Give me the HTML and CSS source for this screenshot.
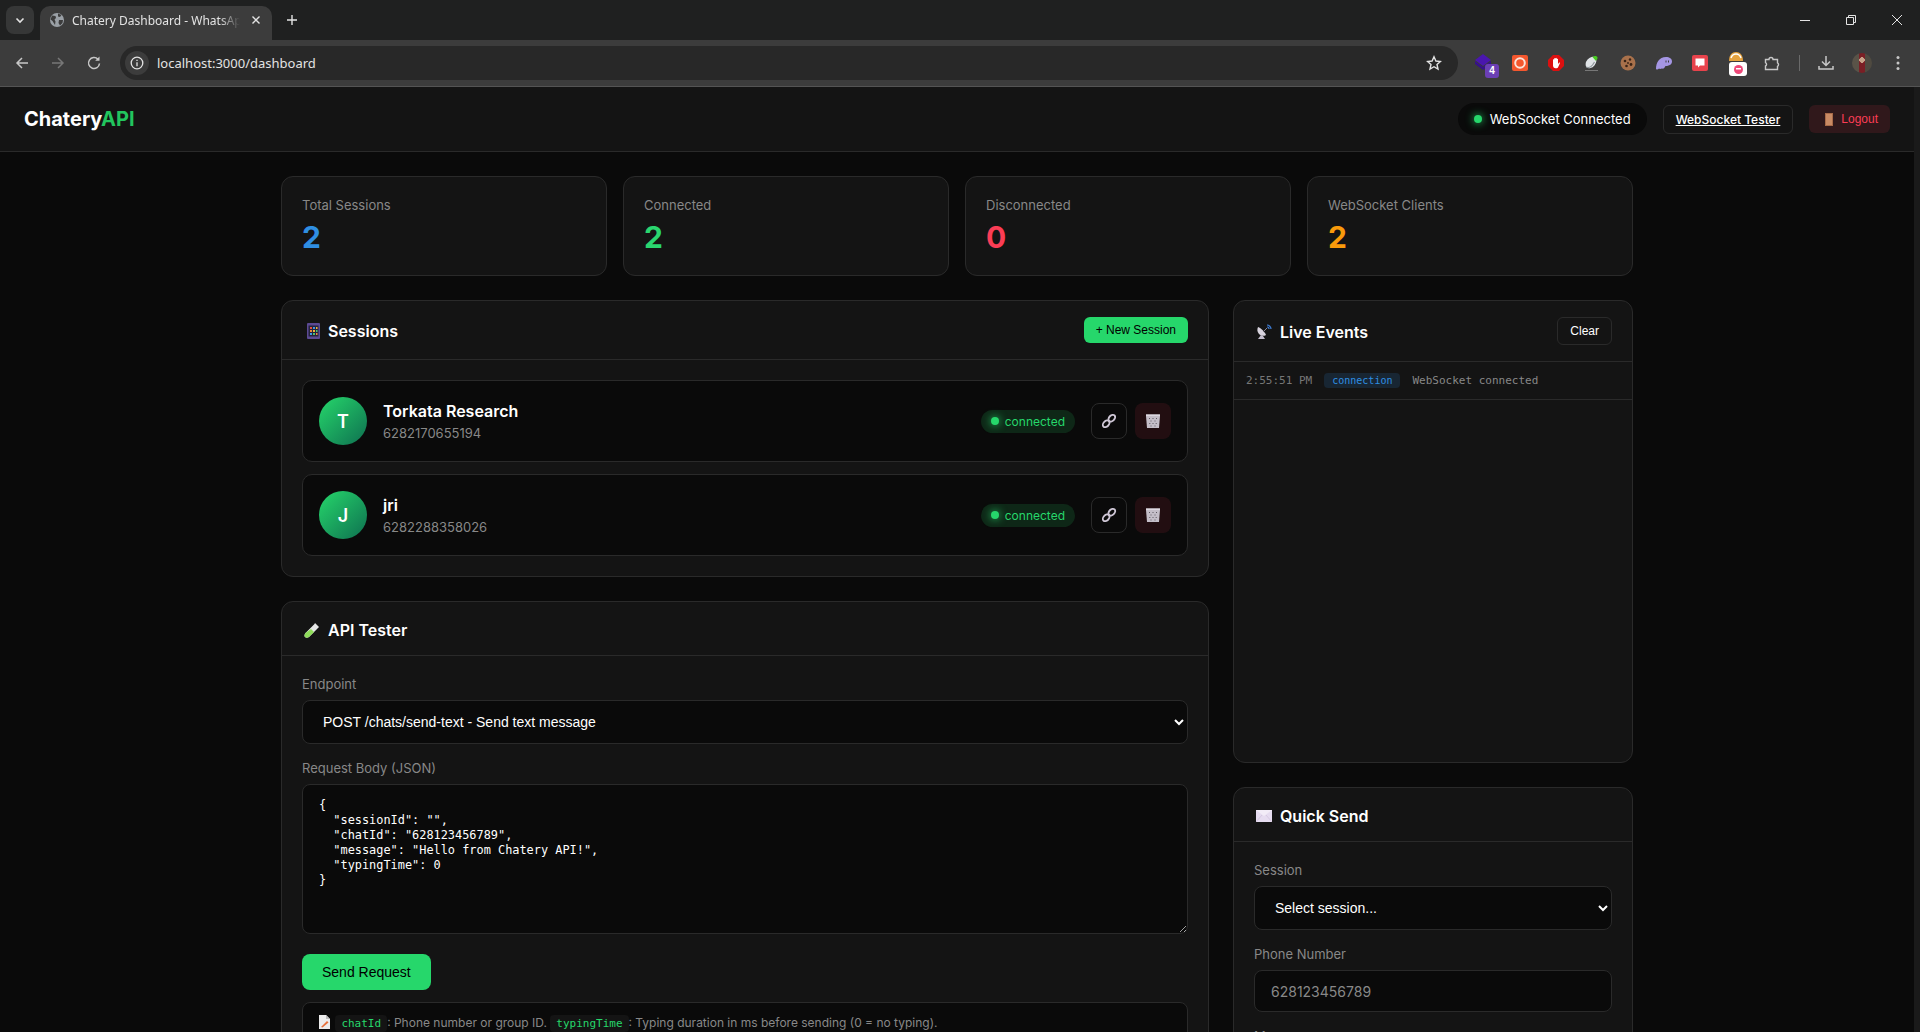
FILE: index.html
```html
<!DOCTYPE html>
<html lang="en">
<head>
  <meta charset="UTF-8">
  <title>Chatery Dashboard - WhatsApp API</title>
  <link rel="stylesheet" href="styles.css">
</head>
<body>

<div class="browser">
  <div class="tabstrip">
    <div class="tab-menu">
      <svg width="12" height="12" viewBox="0 0 12 12"><path d="M2.500 4.500 6 8l3.500-3.500" fill="none" stroke="#e3e3e3" stroke-width="1.600"/></svg>
    </div>
    <div class="tab">
      <svg width="16" height="16" viewBox="0 0 16 16"><circle cx="8" cy="8" r="7" fill="#9aa0a6"/><path d="M3 3.500 6.500 4 7 6 5.500 7.500 6.500 9.500 6 13 3.500 9 1.500 7.500ZM9 1.500 12.500 3 11 5 9 4.500ZM10 8h4l-.5 3-2.500 2.500L9.500 11Z" fill="#3c3c3c"/></svg>
      <span class="tab-title">Chatery Dashboard - WhatsApp API</span>
      <svg class="tab-close" width="10" height="10" viewBox="0 0 10 10"><path d="M1.500 1.500l7 7M8.500 1.500l-7 7" stroke="#e3e3e3" stroke-width="1.400"/></svg>
    </div>
    <svg class="tab-new" width="12" height="12" viewBox="0 0 12 12"><path d="M6 1v10M1 6h10" stroke="#e3e3e3" stroke-width="1.400"/></svg>
    <div class="win-controls">
      <svg width="12" height="12" viewBox="0 0 12 12"><path d="M1 6.500h10" stroke="#e3e3e3"/></svg>
      <svg width="12" height="12" viewBox="0 0 12 12"><path d="M1.500 3.500h7v7h-7zM3.500 3.500v-2h7v7h-2" fill="none" stroke="#e3e3e3"/></svg>
      <svg width="12" height="12" viewBox="0 0 12 12"><path d="M1 1l10 10M11 1 1 11" stroke="#e3e3e3"/></svg>
    </div>
  </div>

  <div class="toolbar">
    <svg class="tool-btn" width="16" height="16" viewBox="0 0 16 16"><path d="M14 8H3M8 3 3 8l5 5" fill="none" stroke="#c7c7c7" stroke-width="1.500"/></svg>
    <svg class="tool-btn" width="16" height="16" viewBox="0 0 16 16"><path d="M2 8h11M8 3l5 5-5 5" fill="none" stroke="#777" stroke-width="1.500"/></svg>
    <svg class="tool-btn" width="16" height="16" viewBox="0 0 16 16"><path d="M13.500 8.500A5.500 5.500 0 1 1 12 4.200" fill="none" stroke="#c7c7c7" stroke-width="1.500"/><path d="M13.500 1.500v4.300H9.200z" fill="#c7c7c7"/></svg>
    <div class="omnibox">
      <div class="site-info">
        <svg width="14" height="14" viewBox="0 0 14 14"><circle cx="7" cy="7" r="5.800" fill="none" stroke="#e3e3e3" stroke-width="1.300"/><path d="M7 6.200v4M7 3.800v1.300" stroke="#e3e3e3" stroke-width="1.300"/></svg>
      </div>
      <span class="url">localhost:3000/dashboard</span>
      <svg class="url-star" width="16" height="16" viewBox="0 0 16 16"><path d="M8 1.800l1.900 4.200 4.500.5-3.400 3 1 4.500L8 11.700l-4 2.300 1-4.500-3.400-3 4.500-.5z" fill="none" stroke="#e3e3e3" stroke-width="1.400"/></svg>
    </div>
    <div class="extensions">
      <div class="ext">
        <svg width="20" height="20" viewBox="0 0 20 20"><path d="M9 1l8 6-8 6-8-6z" fill="#4a16ae"/><path d="M1 8l8 6 8-6v3l-8 6-8-6z" fill="#37108c"/></svg>
        <span class="ext-badge">4</span>
      </div>
      <div class="ext">
        <svg width="16" height="16" viewBox="0 0 16 16"><rect width="16" height="16" rx="2" fill="#f4572e"/><circle cx="8" cy="8" r="4.800" fill="none" stroke="#fbe3da" stroke-width="2"/></svg>
      </div>
      <div class="ext">
        <svg width="16" height="16" viewBox="0 0 16 16"><path d="M5 0h6l5 5v6l-5 5H5l-5-5V5z" fill="#dc1010"/><path d="M5 8V4.500a.8.8 0 0 1 1.200 0V7V3.500a.8.8 0 0 1 1.300 0V7V3.300a.8.8 0 0 1 1.300 0V7V4a.8.8 0 0 1 1.200 0v5l1-1.300c.6-.5 1.200 0 .9.600L10 12.500c-.3.500-.8.700-1.300.700H7.500C6 13.200 5 12 5 10.500z" fill="#fff"/></svg>
      </div>
      <div class="ext">
        <svg width="18" height="18" viewBox="0 0 18 18"><ellipse cx="8" cy="8.500" rx="6.500" ry="4.500" transform="rotate(-50 8 8.500)" fill="#dfe3e6"/><path d="M3.500 13c1.500 1 4 .5 6-2l2-3" fill="none" stroke="#8f969b" stroke-width="1.200"/><path d="M9.500 3c2-1.500 4.500-1 5 .5.300 1.200-.5 2.200-1.800 3.200z" fill="#46cc1f"/><path d="M2 16.500h13" stroke="#777"/></svg>
      </div>
      <div class="ext">
        <svg width="16" height="16" viewBox="0 0 16 16"><circle cx="8" cy="8" r="7.500" fill="#a9714b"/><circle cx="5" cy="6" r="1.300" fill="#3a2417"/><circle cx="10" cy="4.500" r="1.200" fill="#3a2417"/><circle cx="11" cy="9.500" r="1.400" fill="#3a2417"/><circle cx="6.500" cy="11" r="1.300" fill="#3a2417"/><circle cx="8" cy="8" r=".9" fill="#3a2417"/></svg>
      </div>
      <div class="ext">
        <svg width="18" height="14" viewBox="0 0 18 14"><path d="M1 13c0-6 3-12 10-12 3.500 0 6 1.500 6 4.500S14 10 10.500 10c-1 2-2 3-3.500 2.500C5.500 13 4.500 13 4 12.500 3 13.500 2 14 1 13z" fill="#a596e4"/><path d="M11 4.500v2M13.500 4.500v2" stroke="#3c3c3c"/></svg>
      </div>
      <div class="ext">
        <svg width="16" height="16" viewBox="0 0 16 16"><rect width="16" height="16" rx="2" fill="#e8434c"/><path d="M3.500 3.500h9v7H8l-2 2v-2H3.500z" fill="#fff"/></svg>
      </div>
      <div class="ext">
        <svg class="ext-cookie" width="16" height="14" viewBox="0 0 16 14"><path d="M1 10C1 4 4 1 8 1s7 3 7 9z" fill="#e6a33e"/><path d="M3 7c1-3 3-4 5-4s4 1 5 4" fill="none" stroke="#fff" stroke-width="1.500"/></svg>
        <span class="ext-block"><i></i></span>
      </div>
      <div class="ext">
        <svg width="16" height="16" viewBox="0 0 16 16"><path d="M1.500 4.500H5a2 2 0 0 1 4 0h4.500v3.300a2 2 0 0 1 0 3.500v3.200h-12v-3.500a1.800 1.800 0 0 0 0-3.300z" fill="none" stroke="#c7c7c7" stroke-width="1.400"/></svg>
      </div>
      <div class="tool-sep"></div>
      <div class="ext">
        <svg width="16" height="16" viewBox="0 0 16 16"><path d="M8 1v9M4 6.500 8 10.500l4-4M1 11v3h14v-3" fill="none" stroke="#c7c7c7" stroke-width="1.500"/></svg>
      </div>
      <div class="ext">
        <div class="avatar-user"></div>
      </div>
      <div class="ext">
        <svg width="4" height="16" viewBox="0 0 4 16"><circle cx="2" cy="2.500" r="1.500" fill="#c7c7c7"/><circle cx="2" cy="8" r="1.500" fill="#c7c7c7"/><circle cx="2" cy="13.500" r="1.500" fill="#c7c7c7"/></svg>
      </div>
    </div>
  </div>

  <div class="viewport">
    <div class="page">
      <header class="header">
        <div class="logo">Chatery<span>API</span></div>
        <div class="header-right">
          <div class="ws-status"><span class="dot"></span>WebSocket Connected</div>
          <a class="btn-outline" href="#">WebSocket Tester</a>
          <button class="btn-logout">
            <svg width="10" height="13" viewBox="0 0 10 13"><rect x="1" width="8" height="13" fill="#a86a48"/><rect x="2" y="1" width="6" height="11" fill="#c98a64"/></svg>
            Logout
          </button>
        </div>
      </header>

      <main class="main">
        <div class="stats">
          <div class="stat"><div class="stat-label">Total Sessions</div><div class="stat-value blue">2</div></div>
          <div class="stat"><div class="stat-label">Connected</div><div class="stat-value green">2</div></div>
          <div class="stat"><div class="stat-label">Disconnected</div><div class="stat-value red">0</div></div>
          <div class="stat"><div class="stat-label">WebSocket Clients</div><div class="stat-value orange">2</div></div>
        </div>

        <div class="columns">
          <div class="col">
            <section class="card">
              <div class="card-head">
                <h2>
                  <span class="emoji"><svg width="13" height="16" viewBox="0 0 13 16"><rect width="13" height="16" rx="1" fill="#5b4a93"/><rect x="1.500" y="2.500" width="10" height="11" fill="#26233c"/><path d="M3 4h2v2H3z" fill="#e8533f"/><path d="M6 4h2v2H6zM3 10h2v2H3z" fill="#3f9ae8"/><path d="M9 4h1.500v2H9zM6 7h2v2H6z" fill="#f2b53a"/><path d="M3 7h2v2H3zM9 10h1.500v2H9z" fill="#e88a3f"/><path d="M9 7h1.500v2H9zM6 10h2v2H6z" fill="#4fc46a"/></svg></span>
                  Sessions
                </h2>
                <button class="btn-green small">+ New Session</button>
              </div>
              <div class="card-body sessions">
                <div class="session">
                  <div class="avatar">T</div>
                  <div class="session-info">
                    <div class="session-name">Torkata Research</div>
                    <div class="session-phone">6282170655194</div>
                  </div>
                  <span class="badge"><span class="dot"></span>connected</span>
                  <button class="icon-btn">
                    <svg width="16" height="16" viewBox="0 0 16 16"><g fill="none" stroke="#cfc7d6" stroke-width="1.900"><ellipse cx="10.800" cy="5.200" rx="3.900" ry="2.700" transform="rotate(-45 10.800 5.200)"/><ellipse cx="5.200" cy="10.800" rx="3.900" ry="2.700" transform="rotate(-45 5.200 10.800)"/></g></svg>
                  </button>
                  <button class="icon-btn danger">
                    <svg width="14" height="14" viewBox="0 0 14 14"><path d="M0 .5h14V2l-1 12H1L0 2z" fill="#c4bec8"/><path d="M0 .5h14V2H0z" fill="#ddd8e0"/><path d="M3.500 4v1M7 4v1M10.500 4v1M5 6.500v1M9 6.500v1M3.800 9v1M7 9v1M10.200 9v1M5 11.500v1M9 11.500v1" stroke="#5d5860"/></svg>
                  </button>
                </div>
                <div class="session">
                  <div class="avatar">J</div>
                  <div class="session-info">
                    <div class="session-name">jri</div>
                    <div class="session-phone">6282288358026</div>
                  </div>
                  <span class="badge"><span class="dot"></span>connected</span>
                  <button class="icon-btn">
                    <svg width="16" height="16" viewBox="0 0 16 16"><g fill="none" stroke="#cfc7d6" stroke-width="1.900"><ellipse cx="10.800" cy="5.200" rx="3.900" ry="2.700" transform="rotate(-45 10.800 5.200)"/><ellipse cx="5.200" cy="10.800" rx="3.900" ry="2.700" transform="rotate(-45 5.200 10.800)"/></g></svg>
                  </button>
                  <button class="icon-btn danger">
                    <svg width="14" height="14" viewBox="0 0 14 14"><path d="M0 .5h14V2l-1 12H1L0 2z" fill="#c4bec8"/><path d="M0 .5h14V2H0z" fill="#ddd8e0"/><path d="M3.500 4v1M7 4v1M10.500 4v1M5 6.500v1M9 6.500v1M3.800 9v1M7 9v1M10.200 9v1M5 11.500v1M9 11.500v1" stroke="#5d5860"/></svg>
                  </button>
                </div>
              </div>
            </section>

            <section class="card">
              <div class="card-head">
                <h2>
                  <span class="emoji"><svg width="16" height="16" viewBox="0 0 16 16"><path d="M11 1l4 4-1 1-9 9c-1.500 1-3 1-4 0s-.5-2.500.5-4l9-9z" fill="#e6e6e6"/><path d="M7 7l3 3-5 5c-1.500 1-3 1-4 0s-.5-2.500.5-4z" fill="#8fdc5a"/></svg></span>
                  API Tester
                </h2>
              </div>
              <div class="card-body">
                <div class="field">
                  <label>Endpoint</label>
                  <select class="input select"><option>POST /chats/send-text - Send text message</option></select>
                </div>
                <div class="field">
                  <label>Request Body (JSON)</label>
                  <textarea class="input code" spellcheck="false">{
  "sessionId": "",
  "chatId": "628123456789",
  "message": "Hello from Chatery API!",
  "typingTime": 0
}</textarea>
                </div>
                <button class="btn-green send">Send Request</button>
                <div class="hint">
                  <svg width="11" height="14" viewBox="0 0 11 14"><path d="M0 0h7l4 4v10H0z" fill="#ececec"/><path d="M7 0v4h4z" fill="#bbb"/><path d="M2 12l6-6 1.500 1.500-6 5z" fill="#e8703a"/></svg>
                  <code>chatId</code>: Phone number or group ID. <code>typingTime</code>: Typing duration in ms before sending (0 = no typing).
                </div>
              </div>
            </section>
          </div>

          <div class="col">
            <section class="card">
              <div class="card-head">
                <h2>
                  <span class="emoji"><svg width="15" height="16" viewBox="0 0 15 16"><path d="M1 3c3 1 7 5 8 8-2 1.500-5 1-7-1S0 5 1 3z" fill="#d8d3de"/><path d="M4 11l-3 4h7l-2-3z" fill="#c4bece"/><path d="M6 8l4-4" stroke="#8a8494"/><path d="M10 1c2 0 4 2 4 4M10 3c1 0 2 1 2 2" fill="none" stroke="#3f7fd8" stroke-width="1.200"/></svg></span>
                  Live Events
                </h2>
                <button class="btn-clear">Clear</button>
              </div>
              <div class="events">
                <div class="event">
                  <span class="event-time">2:55:51 PM</span>
                  <span class="event-type">connection</span>
                  <span class="event-msg">WebSocket connected</span>
                </div>
              </div>
            </section>

            <section class="card">
              <div class="card-head">
                <h2>
                  <span class="emoji"><svg width="16" height="12" viewBox="0 0 16 12"><rect width="16" height="12" fill="#e6dcf0"/><path d="M0 0l8 6 8-6" fill="#f2ecf7"/><path d="M0 12l6-7M16 12l-6-7" stroke="#cbbcd8" stroke-width=".6"/></svg></span>
                  Quick Send
                </h2>
              </div>
              <div class="card-body">
                <div class="field">
                  <label>Session</label>
                  <select class="input select"><option>Select session...</option></select>
                </div>
                <div class="field">
                  <label>Phone Number</label>
                  <input class="input phone" type="text" placeholder="628123456789">
                </div>
                <div class="field">
                  <label>Message</label>
                  <textarea class="input" rows="3" placeholder="Type your message..."></textarea>
                </div>
              </div>
            </section>
          </div>
        </div>
      </main>
    </div>
    <div class="scrollbar"></div>
  </div>
</div>

</body>
</html>
```

FILE: styles.css
```css
* {
  box-sizing: border-box;
}
html, body {
  height: 100%;
  margin: 0;
  overflow: hidden;
}
body {
  background: #0a0a0a;
  color: #fff;
  font-family: Inter, "Liberation Sans", sans-serif;
}
button {
  font-family: "Liberation Sans", sans-serif;
  cursor: pointer;
}

/* browser chrome */
.browser {
  height: 100vh;
  display: flex;
  flex-direction: column;
}
.tabstrip {
  height: 40px;
  flex-shrink: 0;
  background: #1f2020;
  display: flex;
  align-items: flex-end;
  padding-left: 6px;
}
.tab-menu {
  width: 28px;
  height: 28px;
  margin-bottom: 6px;
  border-radius: 8px;
  background: #363737;
  display: flex;
  align-items: center;
  justify-content: center;
}
.tab {
  width: 232px;
  height: 34px;
  margin-left: 6px;
  padding: 0 9px 6px;
  border-radius: 10px 10px 0 0;
  background: #3c3c3c;
  display: flex;
  align-items: center;
  gap: 7px;
}
.tab-title {
  flex: 1;
  min-width: 0;
  font: 12px "Noto Sans", sans-serif;
  color: #e3e3e3;
  white-space: nowrap;
  overflow: hidden;
  -webkit-mask-image: linear-gradient(to right, #000 88%, transparent);
  mask-image: linear-gradient(to right, #000 88%, transparent);
}
.tab-close {
  flex-shrink: 0;
  margin: 0 2px 0 4px;
}
.tab-new {
  margin: 0 0 14px 14px;
}
.win-controls {
  margin-left: auto;
  height: 40px;
  display: flex;
  align-items: center;
  gap: 34px;
  padding-right: 17px;
}
.toolbar {
  height: 47px;
  flex-shrink: 0;
  background: #3c3c3c;
  border-bottom: 1px solid #545454;
  display: flex;
  align-items: center;
  padding-left: 14px;
}
.tool-btn {
  margin-right: 20px;
}
.omnibox {
  width: 1338px;
  height: 34px;
  margin-left: -2px;
  border-radius: 17px;
  background: #282828;
  display: flex;
  align-items: center;
  padding: 0 12px 0 5px;
}
.site-info {
  width: 24px;
  height: 24px;
  border-radius: 50%;
  background: #3c3c3c;
  display: flex;
  align-items: center;
  justify-content: center;
}
.url {
  margin-left: 8px;
  font: 13px "Noto Sans", sans-serif;
  color: #e3e3e3;
}
.url-star {
  margin-left: auto;
  margin-right: 4px;
}
.extensions {
  display: flex;
  align-items: center;
  margin-left: 8px;
}
.ext {
  width: 36px;
  height: 32px;
  position: relative;
  display: flex;
  align-items: center;
  justify-content: center;
}
.ext-badge {
  position: absolute;
  left: 19px;
  top: 17px;
  width: 14px;
  height: 14px;
  border-radius: 3px;
  background: #6b3fb5;
  color: #fff;
  font: bold 10px/14px "Liberation Sans", sans-serif;
  text-align: center;
}
.ext-cookie {
  margin-bottom: 10px;
}
.ext-block {
  position: absolute;
  left: 11px;
  top: 15px;
  width: 18px;
  height: 14px;
  border-radius: 3px;
  background: #fff;
  display: flex;
  align-items: center;
  justify-content: center;
}
.ext-block i {
  width: 9px;
  height: 9px;
  border-radius: 50%;
  background: linear-gradient(#fff, #fff) center / 5px 1.500px no-repeat #ee4878;
}
.tool-sep {
  width: 1px;
  height: 16px;
  margin: 0 8px 0 9px;
  background: #6a6a6a;
}
.avatar-user {
  width: 20px;
  height: 20px;
  border-radius: 50%;
  background: radial-gradient(circle at 50% 35%, #c9a288 0 16%, transparent 18%), linear-gradient(90deg, #5a5348 0 35%, #7a1f25 35% 65%, #4f4a40 65%);
}

/* page */
.viewport {
  flex: 1;
  min-height: 0;
  display: flex;
  overflow: hidden;
}
.page {
  flex: 1;
  min-width: 0;
}
.scrollbar {
  width: 6px;
  background: #1a1a1a;
}
.header {
  height: 65px;
  padding: 0 24px;
  background: #141414;
  border-bottom: 1px solid #2a2a2a;
  display: flex;
  align-items: center;
  justify-content: space-between;
}
.logo {
  font-size: 20px;
  font-weight: 700;
}
.logo span {
  color: #22c55e;
}
.header-right {
  display: flex;
  align-items: center;
  gap: 16px;
}
.dot {
  width: 8px;
  height: 8px;
  border-radius: 50%;
  background: #26d76b;
  box-shadow: 0 0 8px #26d76b;
}
.ws-status {
  height: 32px;
  padding: 0 16px;
  border-radius: 16px;
  background: #0a0a0a;
  font-size: 13px;
  font-weight: 400;
  display: flex;
  align-items: center;
  gap: 8px;
}
.btn-outline {
  height: 29px;
  padding: 0 12px;
  border: 1px solid #2a2a2a;
  border-radius: 6px;
  color: #fff;
  font-size: 12px;
  font-weight: 500;
  line-height: 27px;
}
.btn-logout {
  height: 28px;
  padding: 0 12px 0 15px;
  border: none;
  border-radius: 6px;
  background: rgba(251, 61, 85, 0.12);
  color: #fb3d55;
  font-size: 12px;
  display: flex;
  align-items: center;
  gap: 7px;
}
.main {
  max-width: 1400px;
  margin: 0 auto;
  padding: 24px;
}
.stats {
  display: grid;
  grid-template-columns: repeat(4, 1fr);
  gap: 16px;
  margin-bottom: 24px;
}
.stat {
  height: 100px;
  padding: 20px;
  background: #141414;
  border: 1px solid #2a2a2a;
  border-radius: 12px;
}
.stat-label {
  font-size: 13px;
  line-height: 16px;
  color: #888;
  margin-bottom: 6px;
}
.stat-value {
  font-size: 30px;
  font-weight: 700;
  line-height: 36px;
}
.blue { color: #2f8fe3; }
.green { color: #2ad66f; }
.red { color: #fb3d55; }
.orange { color: #f99a0b; }
.columns {
  display: grid;
  grid-template-columns: 1fr 400px;
  gap: 24px;
  align-items: start;
}
.col {
  display: flex;
  flex-direction: column;
  gap: 24px;
}
.card {
  background: #141414;
  border: 1px solid #2a2a2a;
  border-radius: 12px;
  min-width: 0;
}
.card-head {
  min-height: 54px;
  padding: 16px 20px;
  border-bottom: 1px solid #2a2a2a;
  display: flex;
  align-items: center;
  justify-content: space-between;
}
.card-head h2 {
  margin: 0;
  padding-top: 2px;
  font-size: 16px;
  line-height: 18px;
  font-weight: 600;
  display: flex;
  align-items: center;
  gap: 8px;
}
.emoji {
  width: 18px;
  height: 16px;
  display: flex;
  justify-content: flex-end;
  align-items: center;
}
.card-body {
  padding: 20px;
}
.btn-green {
  height: 36px;
  padding: 0 20px;
  border: none;
  border-radius: 8px;
  background: #26d76b;
  color: #000;
  font-size: 14px;
}
.btn-green.send {
  margin-top: 20px;
  display: block;
}
.btn-green.small {
  height: 26px;
  padding: 0 12px;
  border-radius: 6px;
  font-size: 12px;
}
.sessions {
  display: flex;
  flex-direction: column;
  gap: 12px;
}
.session {
  height: 82px;
  padding: 0 16px;
  background: #0a0a0a;
  border: 1px solid #2a2a2a;
  border-radius: 10px;
  display: flex;
  align-items: center;
}
.avatar {
  width: 48px;
  height: 48px;
  border-radius: 50%;
  background: linear-gradient(135deg, #26d76b, #0e7050);
  font-size: 18px;
  font-weight: 600;
  display: flex;
  align-items: center;
  justify-content: center;
}
.session-info {
  flex: 1;
  margin-left: 16px;
}
.session-name {
  font-size: 16px;
  font-weight: 600;
  margin-bottom: 4px;
}
.session-phone {
  font-size: 13px;
  color: #888;
}
.badge {
  height: 23px;
  padding: 0 10px;
  border-radius: 12px;
  background: rgba(37, 211, 102, 0.15);
  color: #26d76b;
  font-size: 12px;
  display: flex;
  align-items: center;
  gap: 6px;
}
.icon-btn {
  width: 36px;
  height: 36px;
  margin-left: 8px;
  padding: 0;
  background: transparent;
  border: 1px solid #2a2a2a;
  border-radius: 8px;
  display: flex;
  align-items: center;
  justify-content: center;
}
.badge + .icon-btn {
  margin-left: 16px;
}
.icon-btn.danger {
  background: rgba(251, 61, 85, 0.1);
  border: none;
}
.field {
  margin-bottom: 16px;
}
.field label {
  display: block;
  margin-bottom: 8px;
  font-size: 13px;
  line-height: 16px;
  color: #888;
}
.input {
  display: block;
  width: 100%;
  background: #0a0a0a;
  border: 1px solid #2a2a2a;
  border-radius: 8px;
  color: #fff;
  padding: 12px 16px;
  font-size: 14px;
  font-family: Inter, "Liberation Sans", sans-serif;
}
.input::placeholder {
  color: #888;
}
.select {
  height: 44px;
  font-family: "Liberation Sans", sans-serif;
}
.phone {
  height: 42px;
}
.code {
  height: 150px;
  padding-top: 13px;
  font: 11.9px/15px "DejaVu Sans Mono", monospace;
  resize: vertical;
}
.hint {
  margin-top: 12px;
  padding: 12px 16px;
  background: #0a0a0a;
  border: 1px solid #2a2a2a;
  border-radius: 8px;
  font-size: 12px;
  color: #888;
}
.hint svg {
  vertical-align: -2px;
  margin-right: 2px;
}
.hint code {
  padding: 2px 6px;
  border-radius: 4px;
  background: #141414;
  color: #26d76b;
  font: 11px "DejaVu Sans Mono", monospace;
}
.btn-clear {
  height: 28px;
  padding: 0 12px;
  background: transparent;
  border: 1px solid #2a2a2a;
  border-radius: 6px;
  color: #fff;
  font-size: 12px;
}
.events {
  height: 400px;
}
.event {
  height: 38px;
  padding: 0 12px;
  border-bottom: 1px solid #2a2a2a;
  display: flex;
  align-items: center;
  gap: 12px;
  font: 11px "DejaVu Sans Mono", monospace;
  color: #888;
}
.event-time {
  color: #777;
}
.event-type {
  padding: 2px 8px;
  border-radius: 4px;
  background: rgba(47, 143, 227, 0.15);
  color: #2f8fe3;
  font-size: 10px;
}
```
